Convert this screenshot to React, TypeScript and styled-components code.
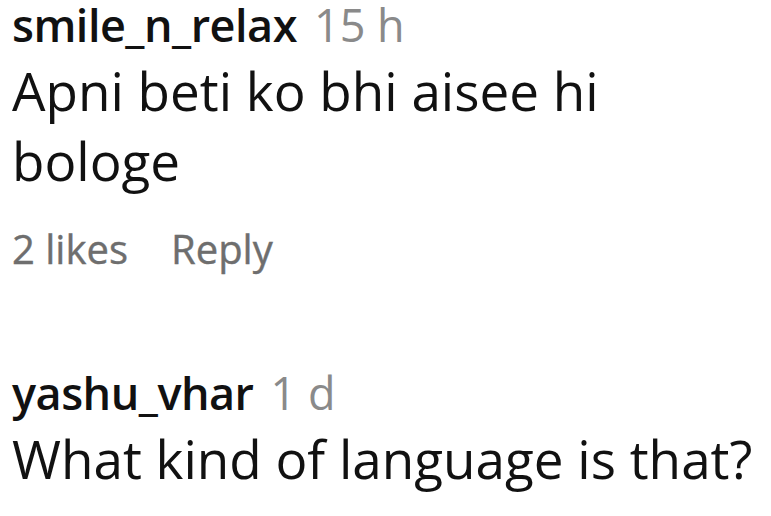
import * as React from 'react';
import styled, { createGlobalStyle } from 'styled-components';

const GlobalStyle = createGlobalStyle`
  html, body {
    margin: 0;
    padding: 0;
    background: #ffffff;
  }
  body {
    font-family: 'Open Sans', 'Noto Sans', sans-serif;
  }
`;

const Page = styled.div`
  width: 771px;
  height: 516px;
  overflow: hidden;
  background: #ffffff;
  padding: 0 0 0 12px;
  box-sizing: border-box;
  display: flex;
  flex-direction: column;
`;

const Comment = styled.div<{ $width: number; $gap: number }>`
  width: ${(p) => p.$width}px;
  display: flex;
  flex-direction: column;
  margin-bottom: ${(p) => p.$gap}px;
`;

const Header = styled.div`
  display: flex;
  align-items: baseline;
  gap: 17px;
  line-height: 50px;
  height: 50px;
`;

const Username = styled.span`
  font-size: 45px;
  font-weight: 600;
  color: #111111;
  letter-spacing: -0.5px;
`;

const Time = styled.span`
  font-size: 45px;
  color: #8a8a8a;
`;

const Body = styled.div`
  font-size: 53px;
  line-height: 70px;
  margin-top: 6px;
  color: #111111;
`;

const Actions = styled.div`
  display: flex;
  gap: 43px;
  margin-top: 28px;
  font-size: 40px;
  color: #6e6e6e;
  line-height: 50px;
  -webkit-text-stroke: 0.4px #6e6e6e;
`;

const ActionLink = styled.span`
  cursor: pointer;
`;

export default function App() {
  return (
    <>
      <GlobalStyle />
      <Page>
        <Comment $width={700} $gap={94}>
          <Header>
            <Username>smile_n_relax</Username>
            <Time>15 h</Time>
          </Header>
          <Body>Apni beti ko bhi aisee hi bologe</Body>
          <Actions>
            <ActionLink>2 likes</ActionLink>
            <ActionLink>Reply</ActionLink>
          </Actions>
        </Comment>
        <Comment $width={759} $gap={0}>
          <Header>
            <Username>yashu_vhar</Username>
            <Time>1 d</Time>
          </Header>
          <Body>What kind of language is that?</Body>
        </Comment>
      </Page>
    </>
  );
}
